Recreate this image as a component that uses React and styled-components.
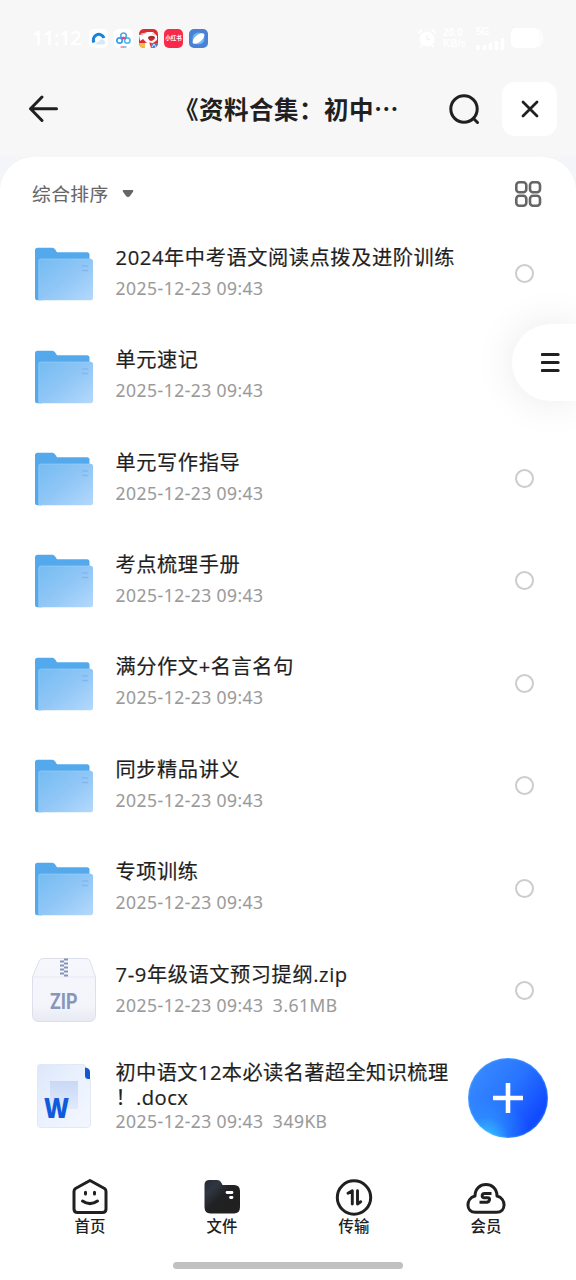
import React from "react";
import styled, { createGlobalStyle } from "styled-components";

const GlobalStyle = createGlobalStyle`
  * { box-sizing: border-box; }
  html, body { margin: 0; padding: 0; background: #f7f7f7; }
  body {
    font-family: "Open Sans", "Noto Sans CJK SC", sans-serif;
    color: #202020;
    overflow: hidden;
  }
`;

const Screen = styled.div`
  width: 576px;
  height: 1280px;
  display: flex;
  flex-direction: column;
  background: linear-gradient(#f7f7f7 156px, #f3f5f8 157px);
  overflow: hidden;
  position: relative;
`;

const StatusBar = styled.div`
  height: 76px;
  flex: none;
  display: flex;
  align-items: center;
  justify-content: space-between;
  padding: 0 31px 0 32px;
`;
const StatusGroup = styled.div`
  display: flex;
  align-items: center;
  gap: ${(p) => p.$gap}px;
`;
const Clock = styled.span`
  width: 50px;
  margin-right: 7px;
  font: 600 20px/28px "Open Sans", sans-serif;
  letter-spacing: -0.4px;
  color: #fff;
  white-space: nowrap;
`;
const StatusText = styled.div`
  width: ${(p) => p.$w}px;
  font: 700 10px/11.5px "Liberation Sans", sans-serif;
  color: #fff;
  white-space: nowrap;
  span { display: block; }
  svg { display: block; }
`;
const AppBadge = styled.div`
  width: 19px;
  height: 19px;
  margin-right: 6px;
  border-radius: 5px;
  overflow: hidden;
  background: ${(p) => p.$bg};
  display: flex;
  align-items: center;
  justify-content: center;
  color: #fff;
  font: 700 5.5px/19px "Noto Sans CJK SC", sans-serif;
  white-space: nowrap;
  svg { display: block; }
`;

const Header = styled.header`
  height: 81px;
  flex: none;
  display: flex;
  align-items: flex-start;
  padding: 6px 19px 0 26px;
`;
const IconButton = styled.button`
  width: ${(p) => p.$w || 54}px;
  height: 54px;
  flex: none;
  border: 0;
  padding: 0;
  border-radius: 13px;
  background: ${(p) => (p.$card ? "#fff" : "transparent")};
  display: flex;
  align-items: center;
  justify-content: ${(p) => p.$align || "center"};
`;
const Title = styled.h1`
  margin: 0;
  flex: 1;
  min-width: 0;
  padding-left: 86px;
  font: 700 24.5px/54px "Noto Sans CJK SC", sans-serif;
  letter-spacing: 0.5px;
  white-space: nowrap;
`;

const Sheet = styled.main`
  flex: 1;
  min-height: 0;
  background: #fff;
  border-radius: 34px 34px 0 0;
  display: flex;
  flex-direction: column;
`;
const SortBar = styled.div`
  height: 65px;
  flex: none;
  display: flex;
  align-items: center;
  justify-content: space-between;
  padding: 8px 34px 0 32px;
`;
const SortButton = styled.div`
  display: flex;
  align-items: center;
  gap: 13px;
  font-size: 18.7px;
  line-height: 28px;
  letter-spacing: 0.5px;
  color: #666;
  -webkit-text-stroke: 0.1px #666;
`;
const List = styled.div`
  flex: 1;
  min-height: 0;
  overflow: hidden;
`;
const Row = styled.div`
  height: ${(p) => (p.$tall ? 109 : 102.4)}px;
  display: flex;
  align-items: center;
  padding: 0 42px 0 32px;
`;
const Thumb = styled.div`
  width: 64px;
  height: 64px;
  flex: none;
  margin-right: 19.5px;
  svg { display: block; }
`;
const Info = styled.div`
  flex: 1;
  min-width: 0;
  padding-top: ${(p) => (p.$tall ? 3 : 0)}px;
  padding-bottom: ${(p) => (p.$tall ? 0 : 1.6)}px;
`;
const Name = styled.div`
  font-size: 20.2px;
  line-height: ${(p) => (p.$tall ? 24.5 : 31)}px;
  letter-spacing: ${(p) => (p.$tall ? 0.42 : 0.6)}px;
  white-space: pre;
  color: #1f1f1f;
  -webkit-text-stroke: 0.2px #1f1f1f;
`;
const Meta = styled.div`
  font-size: 17.5px;
  line-height: ${(p) => (p.$tall ? 25 : 30)}px;
  letter-spacing: 0.5px;
  word-spacing: -0.4px;
  white-space: pre;
  color: #999;
  -webkit-text-stroke: 0.15px #999;
`;
const Radio = styled.div`
  width: 19px;
  height: 19px;
  flex: none;
  margin-top: 1px;
  border: 2px solid #ccc;
  border-radius: 50%;
`;

const NavBar = styled.nav`
  height: 111px;
  flex: none;
  margin-bottom: 18px;
  display: flex;
  padding: 27px 24px 0;
  background: #fff;
`;
const NavItem = styled.div`
  flex: 1;
  display: flex;
  flex-direction: column;
  align-items: center;
  font-size: 15.4px;
  line-height: 21px;
  font-weight: 500;
  svg { display: block; }
`;
const HomeIndicator = styled.div`
  width: 230px;
  height: 7px;
  border-radius: 4px;
  background: #c1c1c1;
  position: absolute;
  left: 173px;
  bottom: 11px;
`;
const SideTab = styled.div`
  position: absolute;
  right: 0;
  top: 324px;
  width: 64px;
  height: 77px;
  border-radius: 39px 0 0 39px;
  background: #fff;
  box-shadow: 0 0 42px rgba(0, 0, 0, 0.09);
  display: flex;
  align-items: center;
  padding-left: 29px;
`;
const AddButton = styled.div`
  position: absolute;
  left: 468px;
  top: 1058px;
  width: 80px;
  height: 80px;
  border-radius: 50%;
  background:
    radial-gradient(circle at 24% 102%, rgba(56, 205, 255, 0.95) 0, rgba(48, 170, 255, 0.35) 22%, rgba(48, 150, 255, 0) 42%),
    linear-gradient(125deg, #388aff 10%, #2874ff 48%, #124cff 80%);
  box-shadow: inset 0 0 2px rgba(110, 215, 255, 0.9);
  display: flex;
  align-items: center;
  justify-content: center;
`;

const dark = "#202020";

const FolderIcon = () => (
  <svg width="64" height="64" viewBox="0 -0.8 64 64">
    <defs>
      <linearGradient id="folderFront" x1="0" y1="0" x2="1" y2="1">
        <stop offset="0" stopColor="#74bcf2" />
        <stop offset=".5" stopColor="#90c6f6" />
        <stop offset="1" stopColor="#b4d9fc" />
      </linearGradient>
    </defs>
    <path d="M3 8.500Q3 6 5.500 6H20.500Q22 6 23 7.500L25 10.500H55Q57.500 10.500 57.500 13V20L10 58.500H5.500Q3 58.500 3 56Z" fill="#54a9ec" />
    <path d="M6.500 19Q6.500 17 9 17H58.500Q61 17 61 19.500V56Q61 58.500 58.500 58.500H6.500Z" fill="url(#folderFront)" />
    <path d="M6.800 58V19Q6.800 17.300 9 17.300H58" stroke="#a4d3f8" strokeOpacity=".6" strokeWidth=".8" fill="none" />
    <path d="M50 24.200H56.300M50 28.700H56.300" stroke="#80b9ef" strokeWidth="1.500" />
  </svg>
);

const ZipIcon = () => (
  <svg width="64" height="64" viewBox="0 0 64 64">
    <defs>
      <linearGradient id="zipBody" x1="0" y1="0" x2="0" y2="1">
        <stop offset="0" stopColor="#f5f7fd" />
        <stop offset=".75" stopColor="#f3f5fb" />
        <stop offset="1" stopColor="#e7e9f4" />
      </linearGradient>
    </defs>
    <path d="M7 3Q8 .500 11 .500H54Q57 .500 58 3L63.500 19V57Q63.500 63.500 57 63.500H7Q.500 63.500 .500 57V19Z" fill="url(#zipBody)" stroke="#dde0eb" />
    <path d="M1 19H63" stroke="#e5e9f5" />
    <path d="M28 3.500h4M32 1.500h4M32 5.500h4M28 7.500h4M32 9.500h4M28 11.500h4M32 13.500h4M28 15.500h4M32 17.500h4" stroke="#8494b6" strokeWidth="2" />
    <text x="18" y="50.500" textLength="27.500" lengthAdjust="spacingAndGlyphs" fontFamily="Roboto, sans-serif" fontWeight="700" fontSize="22" fill="#8796ba">ZIP</text>
  </svg>
);

const DocIcon = () => (
  <svg width="64" height="64" viewBox="0 0 64 64">
    <defs>
      <linearGradient id="docPage" x1="0" y1="0" x2="1" y2="1">
        <stop offset="0" stopColor="#dce7fa" />
        <stop offset=".45" stopColor="#eaf1fe" />
        <stop offset="1" stopColor="#f3f7fe" />
      </linearGradient>
      <linearGradient id="docBlock" x1="0" y1="0" x2="0" y2="1">
        <stop offset="0" stopColor="#c9d8f6" />
        <stop offset="1" stopColor="#e1eafc" />
      </linearGradient>
    </defs>
    <path d="M7.500 .500H51Q54 .500 54 4V15H58.500V60Q58.500 63.500 55 63.500H8.500Q5.500 63.500 5.500 60V3Q5.500 .500 7.500 .500Z" fill="url(#docPage)" stroke="#e2e9f5" />
    <path d="M53 3.500Q58 4 58 8V15H56.500Q53 15 53 11.500Z" fill="#1458ca" />
    <path d="M18 17H46V45H18Z" fill="url(#docBlock)" />
    <text x="12" y="53.500" textLength="25" lengthAdjust="spacingAndGlyphs" fontFamily="Open Sans, sans-serif" fontWeight="800" fontSize="29" fill="#0e5bdc">W</text>
  </svg>
);

const files = [
  { icon: FolderIcon, name: "2024年中考语文阅读点拨及进阶训练", radio: true },
  { icon: FolderIcon, name: "单元速记" },
  { icon: FolderIcon, name: "单元写作指导", radio: true },
  { icon: FolderIcon, name: "考点梳理手册", radio: true },
  { icon: FolderIcon, name: "满分作文+名言名句", radio: true },
  { icon: FolderIcon, name: "同步精品讲义", radio: true },
  { icon: FolderIcon, name: "专项训练", radio: true },
  { icon: ZipIcon, name: "7-9年级语文预习提纲.zip", size: "3.61MB", radio: true },
  { icon: DocIcon, name: "初中语文12本必读名著超全知识梳理\n！.docx", size: "349KB", tall: true },
];

const HomeIcon = () => (
  <svg width="40" height="38" viewBox="0 0 40 38" fill="none" stroke={dark} strokeWidth="3" strokeLinecap="round" strokeLinejoin="round">
    <path d="M20 2.500L34.500 10.500Q36 11.500 36 13.500V31Q36 34.500 32.500 34.500H7.500Q4 34.500 4 31V13.500Q4 11.500 5.500 10.500Z" />
    <path d="M15.500 14.300V16M24.500 14.300V16" />
    <path d="M12.500 23Q20 28.300 27.500 23" />
  </svg>
);
const FilesIcon = () => (
  <svg width="40" height="38" viewBox="0 0 40 38">
    <defs>
      <linearGradient id="tabFolder" x1="0" y1="0" x2=".8" y2=".8">
        <stop offset="0" stopColor="#252a32" />
        <stop offset=".3" stopColor="#303742" />
        <stop offset=".6" stopColor="#202124" />
        <stop offset="1" stopColor="#202020" />
      </linearGradient>
    </defs>
    <path d="M2.500 7Q2.500 2 7.500 2H15Q18 2 19.500 5L20.500 7H32Q38 7 38 13V29Q38 35.500 32 35.500H8.500Q2.500 35.500 2.500 29Z" fill="url(#tabFolder)" />
    <path d="M25 14.500H30M28.500 19.500H30" stroke="#fff" strokeWidth="2.800" strokeLinecap="round" />
  </svg>
);
const TransferIcon = () => (
  <svg width="40" height="38" viewBox="0 0 40 38" fill="none" stroke={dark} strokeLinecap="round" strokeLinejoin="round">
    <circle cx="20" cy="19.500" r="16.700" strokeWidth="3" />
    <path d="M14 15.300L18.300 12.800V26M23.500 12.800V26L26.700 23.700" strokeWidth="2.900" />
  </svg>
);
const MemberIcon = () => (
  <svg width="40" height="38" viewBox="0 0 40 38" fill="none" stroke={dark} strokeWidth="3" strokeLinejoin="round">
    <path d="M9.500 34.300C-.5 34.300 -.5 20.500 9 18C9 2.800 31 2.800 31 18C40.500 20.500 40.500 34.300 30.500 34.300Z" />
    <path d="M25.500 15.500H18.500Q16.500 15.500 16.200 17.500T18 19.800H21.800Q23.800 19.800 23.500 21.800T21 24.300H13.500" />
  </svg>
);

const tabs = [
  { label: "首页", icon: HomeIcon },
  { label: "文件", icon: FilesIcon },
  { label: "传输", icon: TransferIcon },
  { label: "会员", icon: MemberIcon },
];

const BrowserBadge = () => (
  <svg width="19" height="19" viewBox="0 0 19 19">
    <path d="M5 13.500A5.500 5.500 0 1 1 15 9" fill="none" stroke="#1683dd" strokeWidth="3" />
    <path d="M7 15.500Q7 12.500 10 12.500Q11 9.500 14 10.500Q17 11.500 15.500 15.500Z" fill="#d9e7f7" />
  </svg>
);
const CloudBadge = () => (
  <svg width="19" height="19" viewBox="0 0 19 19" fill="none" strokeWidth="1.700">
    <circle cx="5.500" cy="11.500" r="2.700" stroke="#369be9" />
    <circle cx="13.300" cy="11.500" r="2.700" stroke="#52bbed" />
    <circle cx="9.500" cy="6.800" r="2.800" stroke="#5ca4dd" />
    <path d="M7.300 9.800L9.500 8.500L11.700 9.800" stroke="#e44275" />
    <path d="M6.500 18H10" stroke="#e44275" strokeWidth="1" />
    <path d="M9.500 18H12.500" stroke="#3388ef" strokeWidth="1" />
  </svg>
);
const MascotBadge = () => (
  <svg width="19" height="19" viewBox="0 0 19 19">
    <path d="M0 6L5 5L8 3L14 3L18 7V11L14 14L7 13L4 10L1 12Z" fill="#fff" />
    <path d="M2 5L7 4M13 4L16 6" stroke="#f1c5c5" strokeWidth="1.200" />
    <path d="M9 8Q13 5.500 16 8Q16 11 12 12Q9 11 9 8Z" fill="#c72a31" />
    <path d="M10.500 8.500Q13 7.300 15 8.500" stroke="#604048" strokeWidth="1" fill="none" />
    <path d="M0 14H7V19H0Z" fill="#f5be45" />
    <path d="M6 14L10 12.500L12 19H6Z" fill="#fff" />
    <path d="M12 14H19V19H12Z" fill="#4d83cb" />
    <path d="M13 18L15 15L17 18" stroke="#dce8ff" fill="none" />
  </svg>
);
const PlanetBadge = () => (
  <svg width="19" height="19" viewBox="0 0 19 19">
    <circle cx="9.500" cy="9.500" r="6" fill="#66b9f4" />
    <ellipse cx="9.500" cy="9.500" rx="7.200" ry="3.500" transform="rotate(-40 9.500 9.500)" fill="#fff" />
  </svg>
);

const AlarmIcon = () => (
  <svg width="20" height="20" viewBox="0 0 20 20">
    <circle cx="10" cy="11" r="7.500" fill="#fff" />
    <path d="M1 5L5 2M15 2L19 5M5 17L3.500 19M15 17L16.500 19" stroke="#fff" strokeWidth="2" />
    <path d="M10 7V11.500H13" stroke="#f4f4f4" fill="none" strokeWidth="1.300" />
  </svg>
);
const SignalIcon = () => (
  <svg width="29" height="12" viewBox="0 0 29 12">
    <path d="M2 12V7M8.500 12V7M14.500 12V5M20.500 12V3M26.500 12V0" stroke="#fff" strokeWidth="3.500" />
  </svg>
);
const BatteryIcon = () => (
  <svg width="34" height="20" viewBox="0 0 34 20">
    <path d="M24 1H27Q31 1 31 5Q34 10 31 15Q31 19 27 19H24Z" fill="#fcfcfc" />
    <rect x="0" y="0" width="28" height="20" rx="5" fill="#fff" />
  </svg>
);

export default function App() {
  return (
    <>
      <GlobalStyle />
      <Screen>
        <StatusBar>
          <StatusGroup $gap={0}>
            <Clock>11:12</Clock>
            <AppBadge $bg="#fff"><BrowserBadge /></AppBadge>
            <AppBadge $bg="#fff"><CloudBadge /></AppBadge>
            <AppBadge $bg="#e12b2e"><MascotBadge /></AppBadge>
            <AppBadge $bg="#f9294b">小红书</AppBadge>
            <AppBadge $bg="#4a80d5"><PlanetBadge /></AppBadge>
          </StatusGroup>
          <StatusGroup $gap={6}>
            <AlarmIcon />
            <StatusText $w={27}><span>20.0</span><span>KB/s</span></StatusText>
            <StatusText $w={29}>5G<SignalIcon /></StatusText>
            <BatteryIcon />
          </StatusGroup>
        </StatusBar>
        <Header>
          <IconButton $w={62} $align="flex-start">
            <svg width="34" height="30" viewBox="0 0 34 30" fill="none" stroke={dark} strokeWidth="3" strokeLinecap="round" strokeLinejoin="round">
              <path d="M30.500 14.700H4.500M16 3L4.500 14.700L16 26.500" />
            </svg>
          </IconButton>
          <Title>《资料合集：初中…</Title>
          <IconButton $w={76}>
            <svg width="34" height="34" viewBox="0 0 34 34" fill="none" stroke={dark} strokeWidth="3" strokeLinecap="round">
              <circle cx="17" cy="17" r="13.200" />
              <path d="M26.500 26.500L30.500 30.500" />
            </svg>
          </IconButton>
          <IconButton $card $w={55}>
            <svg width="20" height="20" viewBox="0 0 20 20" stroke={dark} strokeWidth="2.800" strokeLinecap="round">
              <path d="M3 3L17 17M17 3L3 17" />
            </svg>
          </IconButton>
        </Header>
        <Sheet>
          <SortBar>
            <SortButton>
              综合排序
              <svg width="12" height="9" viewBox="0 0 12 9">
                <path d="M1.500 1H10.500Q12 1 11 2.800L8 7Q6 9 4 7L1 2.800Q0 1 1.500 1Z" fill="#666" />
              </svg>
            </SortButton>
            <svg width="28" height="28" viewBox="0 0 28 28" fill="none" stroke="#666" strokeWidth="2.600">
              <rect x="2.300" y="2.300" width="10" height="10" rx="3" />
              <rect x="16" y="2.300" width="10" height="10" rx="3" />
              <rect x="2.300" y="15.800" width="10" height="10" rx="3" />
              <rect x="16" y="15.800" width="10" height="10" rx="3" />
            </svg>
          </SortBar>
          <List>
            {files.map(({ icon: Icon, name, size, radio, tall }) => (
              <Row key={name} $tall={tall}>
                <Thumb><Icon /></Thumb>
                <Info $tall={tall}>
                  <Name $tall={tall}>{name}</Name>
                  <Meta $tall={tall}>{"2025-12-23 09:43" + (size ? "  " + size : "")}</Meta>
                </Info>
                {radio && <Radio />}
              </Row>
            ))}
          </List>
          <NavBar>
            {tabs.map(({ label, icon: Icon }) => (
              <NavItem key={label}><Icon />{label}</NavItem>
            ))}
          </NavBar>
        </Sheet>
        <SideTab>
          <svg width="20" height="22" viewBox="0 0 20 22" stroke={dark} strokeWidth="3.200" strokeLinecap="round">
            <path d="M1.300 2.500H17.100M1.300 10.500H17.100M1.300 18.500H17.100" />
          </svg>
        </SideTab>
        <AddButton>
          <svg width="32" height="32" viewBox="0 0 32 32" stroke="#fff" strokeWidth="4.600">
            <path d="M1 16H31M16 1V31" />
          </svg>
        </AddButton>
        <HomeIndicator />
      </Screen>
    </>
  );
}
